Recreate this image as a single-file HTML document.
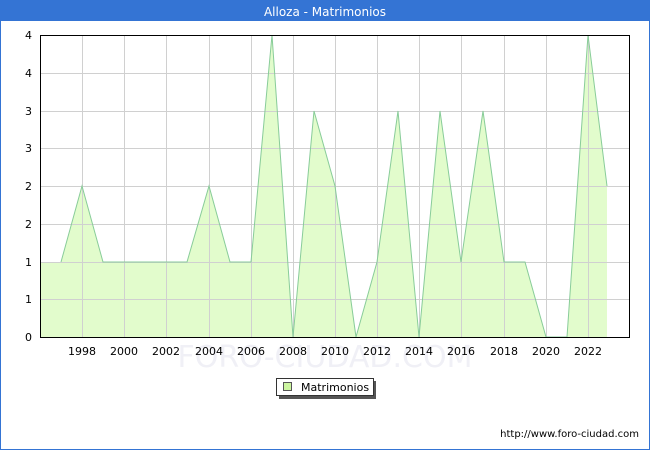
<!DOCTYPE html>
<html><head><style>
body{margin:0;width:650px;height:450px;overflow:hidden;font-family:"DejaVu Sans","Liberation Sans",sans-serif;}
</style></head><body>
<svg width="650" height="450" xmlns="http://www.w3.org/2000/svg" font-family="DejaVu Sans, Liberation Sans, sans-serif">
<rect x="0" y="0" width="650" height="450" fill="#fff"/>
<rect x="0.5" y="0.5" width="649" height="449" fill="none" stroke="#3474d4"/>
<rect x="0" y="0" width="650" height="21" fill="#3474d4"/>
<text x="325" y="16" font-size="12" fill="#fff" text-anchor="middle">Alloza - Matrimonios</text>
<text x="325" y="367" font-size="30" fill="#f0f0f6" text-anchor="middle">FORO-CIUDAD.COM</text>
<polygon fill="#e2fccc" points="40,262 61,262 82,186 103,262 124,262 145,262 166,262 187,262 209,186 230,262 251,262 272,35 293,337 314,111 335,186 356,337 377,262 398,111 419,337 440,111 461,262 483,111 504,262 525,262 546,337 567,337 588,35 607,186 607,337 40,337"/>
<g stroke="#d0d0d0" stroke-width="1">
<line x1="40" y1="299.5" x2="630" y2="299.5"/><line x1="40" y1="262.5" x2="630" y2="262.5"/>
<line x1="40" y1="224.5" x2="630" y2="224.5"/><line x1="40" y1="186.5" x2="630" y2="186.5"/>
<line x1="40" y1="148.5" x2="630" y2="148.5"/><line x1="40" y1="111.5" x2="630" y2="111.5"/>
<line x1="40" y1="73.5" x2="630" y2="73.5"/>
<line x1="82.5" y1="35" x2="82.5" y2="337"/><line x1="124.5" y1="35" x2="124.5" y2="337"/>
<line x1="166.5" y1="35" x2="166.5" y2="337"/><line x1="209.5" y1="35" x2="209.5" y2="337"/>
<line x1="251.5" y1="35" x2="251.5" y2="337"/><line x1="293.5" y1="35" x2="293.5" y2="337"/>
<line x1="335.5" y1="35" x2="335.5" y2="337"/><line x1="377.5" y1="35" x2="377.5" y2="337"/>
<line x1="419.5" y1="35" x2="419.5" y2="337"/><line x1="461.5" y1="35" x2="461.5" y2="337"/>
<line x1="504.5" y1="35" x2="504.5" y2="337"/><line x1="546.5" y1="35" x2="546.5" y2="337"/>
<line x1="588.5" y1="35" x2="588.5" y2="337"/>
</g>
<polyline fill="none" stroke="#88cc99" stroke-width="1" points="61,262 82,186 103,262 124,262 145,262 166,262 187,262 209,186 230,262 251,262 272,35 293,337 314,111 335,186 356,337 377,262 398,111 419,337 440,111 461,262 483,111 504,262 525,262 546,337 567,337 588,35 607,186"/>
<rect x="40.5" y="35.5" width="589" height="302" fill="none" stroke="#000"/>
<g font-size="11" fill="#000" text-anchor="end">
<text x="32" y="341">0</text><text x="32" y="303">1</text><text x="32" y="266">1</text>
<text x="32" y="228">2</text><text x="32" y="190">2</text><text x="32" y="152">3</text>
<text x="32" y="115">3</text><text x="32" y="77">4</text><text x="32" y="39">4</text>
</g>
<g font-size="11" fill="#000" text-anchor="middle">
<text x="82" y="355">1998</text><text x="124" y="355">2000</text><text x="166" y="355">2002</text>
<text x="209" y="355">2004</text><text x="251" y="355">2006</text><text x="293" y="355">2008</text>
<text x="335" y="355">2010</text><text x="377" y="355">2012</text><text x="419" y="355">2014</text>
<text x="461" y="355">2016</text><text x="504" y="355">2018</text><text x="546" y="355">2020</text>
<text x="588" y="355">2022</text>
</g>
<rect x="279" y="381" width="97" height="18" fill="#555"/>
<rect x="276.5" y="378.5" width="97" height="17" fill="#fff" stroke="#333"/>
<rect x="283.5" y="382.5" width="8" height="8" fill="#ccf5a0" stroke="#555"/>
<text x="301" y="391" font-size="11" fill="#000">Matrimonios</text>
<text x="639" y="437" font-size="10" fill="#000" text-anchor="end">http://www.foro-ciudad.com</text>
</svg>
</body></html>
